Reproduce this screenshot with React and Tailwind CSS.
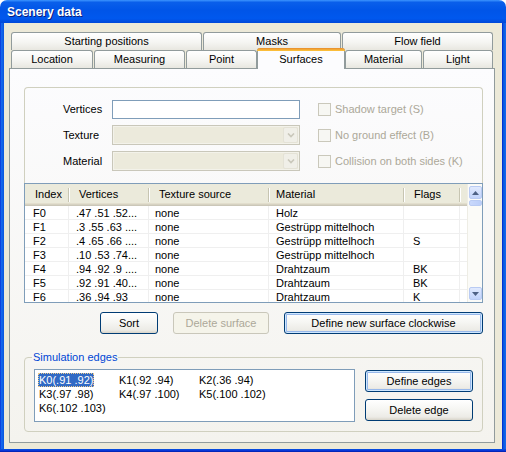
import React from "react"

const rows = [
  ["F0", ".47 .51 .52...", "none", "Holz", ""],
  ["F1", ".3 .55 .63 ....", "none", "Gestrüpp mittelhoch", ""],
  ["F2", ".4 .65 .66 ....", "none", "Gestrüpp mittelhoch", "S"],
  ["F3", ".10 .53 .74...", "none", "Gestrüpp mittelhoch", ""],
  ["F4", ".94 .92 .9 ....", "none", "Drahtzaum", "BK"],
  ["F5", ".92 .91 .40...", "none", "Drahtzaum", "BK"],
  ["F6", ".36 .94 .93", "none", "Drahtzaum", "K"],
]

const edges = ["K0(.91 .92)", "K1(.92 .94)", "K2(.36 .94)", "K3(.97 .98)", "K4(.97 .100)", "K5(.100 .102)", "K6(.102 .103)"]

const cols = [
  { title: "Index", w: "w-[44px]", hp: "pl-[10px]", dp: "pl-[8px]" },
  { title: "Vertices", w: "w-[80px]", hp: "pl-[10px]", dp: "pl-[7px]" },
  { title: "Texture source", w: "w-[120px]", hp: "pl-[10px]", dp: "pl-[6px]" },
  { title: "Material", w: "w-[135px]", hp: "pl-[7px]", dp: "pl-[7px]" },
  { title: "Flags", w: "w-[56px]", hp: "pl-[10px]", dp: "pl-[9px]" },
]

function Tab({ label, className = "" }) {
  return (
    <div className={`h-[18px] flex items-center justify-center rounded-t-[3px] border border-b-0 border-[#919B9C] bg-[linear-gradient(180deg,#FFFFFF_0%,#F5F5F2_55%,#E8E7E0_100%)] ${className}`}>
      {label}
    </div>
  )
}

function Button({ children, className = "", def, disabled }) {
  if (disabled) {
    return (
      <div className={`h-[22px] flex items-center justify-center rounded-[3px] border border-[#C9C7BA] bg-[#F5F4EA] text-[#ACA899] ${className}`}>
        {children}
      </div>
    )
  }
  return (
    <div className={`h-[22px] flex items-center justify-center rounded-[3px] border border-[#003C74] bg-[linear-gradient(180deg,#FFFFFF_0%,#F6F6F3_45%,#ECEBE6_85%,#D8D4C9_100%)] ${def ? "shadow-[inset_0_0_0_1px_#CEE7FF,inset_0_0_0_2px_#98B8EA]" : ""} ${className}`}>
      {children}
    </div>
  )
}

function Check({ label }) {
  return (
    <div className="flex items-center gap-[4px] text-[#ACA899]">
      <div className="w-[13px] h-[13px] border border-[#CAC8BB] bg-[#F7F7F3]" />
      <span>{label}</span>
    </div>
  )
}

function Combo() {
  return (
    <div className="w-[188px] h-[20px] border border-[#C9C7BA] bg-[#ECEADC] shadow-[inset_0_0_0_1px_#F3F2EA] flex justify-end p-[1px]">
      <div className="w-[15px] h-full rounded-[2px] bg-[#F0EFE8] border border-[#E4E2D6] flex items-center justify-center">
        <svg width="8" height="5" viewBox="0 0 8 5">
          <path d="M1 0.5 L4 3.5 L7 0.5" fill="none" stroke="#C9C7BA" strokeWidth="1.6" />
        </svg>
      </div>
    </div>
  )
}

function Arrow({ down }) {
  return (
    <div className="w-[13px] h-[13px] rounded-[2px] border border-[#B9CBF3] bg-[linear-gradient(180deg,#E1EAFE,#C1D3FB)] flex items-center justify-center">
      <svg width="7" height="4" viewBox="0 0 7 4">
        <path d={down ? "M0 0 L7 0 L3.5 4 Z" : "M0 4 L7 4 L3.5 0 Z"} fill="#4D6185" />
      </svg>
    </div>
  )
}

export default function App() {
  return (
    <div className="w-[506px] h-[452px] flex flex-col overflow-hidden bg-white font-['Liberation_Sans',Arial,sans-serif] text-[11px] text-black">
      {/* title bar */}
      <div className="h-[23px] shrink-0 rounded-t-[7px] bg-[linear-gradient(180deg,#3D95FF_0%,#0A5FEA_10%,#0055E8_45%,#0058EE_80%,#0048D8_100%)] flex items-center pl-[7px] pt-[1px]">
        <span className="text-white font-bold text-[12px] [text-shadow:1px_1px_0_#0A1E7A]">Scenery data</span>
      </div>

      <div className="flex flex-1">
        <div className="w-[4px] bg-[linear-gradient(90deg,#0831D9,#166AEE_40%,#0855DD)]" />
        <div className="flex-1 bg-[#ECE9D8] pt-[9px] pl-[5px]">
          <div className="w-[486px]">
            {/* back tab row */}
            <div className="flex gap-[1px] pl-[2px]">
              <Tab label="Starting positions" className="w-[191px]" />
              <Tab label="Masks" className="w-[138px]" />
              <Tab label="Flow field" className="w-[151px]" />
            </div>
            {/* front tab row */}
            <div className="flex items-end h-[18px] pl-[2px]">
              <Tab label="Location" className="w-[82px]" />
              <Tab label="Measuring" className="w-[91px] ml-[1px]" />
              <Tab label="Point" className="w-[71px] ml-[1px]" />
              <div className="relative z-10 w-[88px] h-[21px] -mb-[1px] flex flex-col rounded-t-[3px] border-x border-[#919B9C] bg-[#FCFCFE]">
                <div className="h-[3px] -mx-[1px] rounded-t-[3px] bg-[linear-gradient(180deg,#E68B2C,#FFC73C)]" />
                <div className="flex-1 flex items-center justify-center pb-[1px]">Surfaces</div>
              </div>
              <Tab label="Material" className="w-[77px]" />
              <Tab label="Light" className="w-[70px] ml-[1px]" />
            </div>

            {/* tab panel */}
            <div className="h-[375px] border border-[#919B9C] bg-[linear-gradient(180deg,#FCFCFE,#F4F3EE)] pl-[14px] pt-[18px]">
              <div className="w-[459px] h-[96px] rounded-t-[4px] border border-b-0 border-[#D0D0BF] pt-[12px]">
                <div className="flex items-center h-[19px]">
                  <span className="w-[87px] pl-[38px]">Vertices</span>
                  <div className="w-[188px] h-[19px] border border-[#7F9DB9] bg-white" />
                  <div className="ml-[18px]"><Check label="Shadow target (S)" /></div>
                </div>
                <div className="flex items-center h-[20px] mt-[6px]">
                  <span className="w-[87px] pl-[38px]">Texture</span>
                  <Combo />
                  <div className="ml-[18px]"><Check label="No ground effect (B)" /></div>
                </div>
                <div className="flex items-center h-[20px] mt-[6px]">
                  <span className="w-[87px] pl-[38px]">Material</span>
                  <Combo />
                  <div className="ml-[18px]"><Check label="Collision on both sides (K)" /></div>
                </div>
              </div>

              {/* list view */}
              <div className="w-[459px] h-[120px] border border-[#7F9DB9] bg-white flex overflow-hidden">
                <div className="flex-1 flex flex-col">
                  <div className="h-[22px] shrink-0 flex bg-[#EBEADB] shadow-[inset_0_-1px_0_#CBC7B8,inset_0_-2px_0_#D6D2C2,inset_0_-3px_0_#E2DECD]">
                    {cols.map((c) => (
                      <div key={c.title} className={`${c.w} flex items-center pb-[1px]`}>
                        <span className={c.hp}>{c.title}</span>
                        <div className="ml-auto w-[1px] h-[14px] bg-[#C7C5B2] shadow-[1px_0_0_#FFFFFF]" />
                      </div>
                    ))}
                  </div>
                  {rows.map((r) => (
                    <div key={r[0]} className="h-[14px] shrink-0 flex border-b border-[#EFEFEF]">
                      {r.map((v, i) => (
                        <div key={i} className={`${cols[i].w} ${cols[i].dp} flex items-center pt-[1px] border-r border-[#EFEFEF] whitespace-nowrap overflow-hidden leading-[13px]`}>
                          {v}
                        </div>
                      ))}
                    </div>
                  ))}
                </div>
                <div className="w-[15px] shrink-0 flex flex-col items-center pt-[2px] pb-[2px] bg-[#FBFBF8] border-l border-[#EEEDE5]">
                  <Arrow />
                  <div className="w-[13px] h-[6px] mt-[1px] rounded-[2px] border border-[#B9CBF3] bg-[linear-gradient(90deg,#C9D8FC,#BBCEF9)]" />
                  <div className="flex-1" />
                  <Arrow down />
                </div>
              </div>

              {/* buttons */}
              <div className="flex mt-[9px] pl-[76px]">
                <Button className="w-[58px]">Sort</Button>
                <Button className="w-[96px] ml-[15px]" disabled>Delete surface</Button>
                <Button className="w-[199px] ml-[15px]" def>Define new surface clockwise</Button>
              </div>

              {/* simulation edges */}
              <div className="relative w-[459px] h-[75px] mt-[23px] rounded-[4px] border border-[#D0D0BF] flex pl-[9px] pt-[11px]">
                <span className="absolute left-[7px] -top-[7px] px-[1px] bg-[#F7F6F3] text-[#0046D5] leading-[13px]">Simulation edges</span>
                <div className="w-[321px] h-[53px] border border-[#7F9DB9] bg-white pl-[3px] pt-[3px] grid grid-cols-[80px_80px_80px] auto-rows-[14px] content-start">
                  {edges.map((e, i) => (
                    <div key={e} className="flex items-center">
                      <span className={i === 0 ? "px-[1px] h-[14px] leading-[14px] bg-[#316AC5] text-white outline outline-1 outline-dotted -outline-offset-1 outline-[#E9C98C]" : "px-[1px] leading-[14px]"}>{e}</span>
                    </div>
                  ))}
                </div>
                <div className="ml-[10px] pt-[1px] flex flex-col gap-[7px]">
                  <Button className="w-[108px]" def>Define edges</Button>
                  <Button className="w-[108px]">Delete edge</Button>
                </div>
              </div>
            </div>
          </div>
        </div>
        <div className="w-[4px] bg-[linear-gradient(90deg,#0019CF,#0855DD_30%,#166AEE)]" />
      </div>
      <div className="h-[3px] shrink-0 bg-[linear-gradient(180deg,#0855DD,#0831D9_60%,#001EA0)]" />
    </div>
  )
}
